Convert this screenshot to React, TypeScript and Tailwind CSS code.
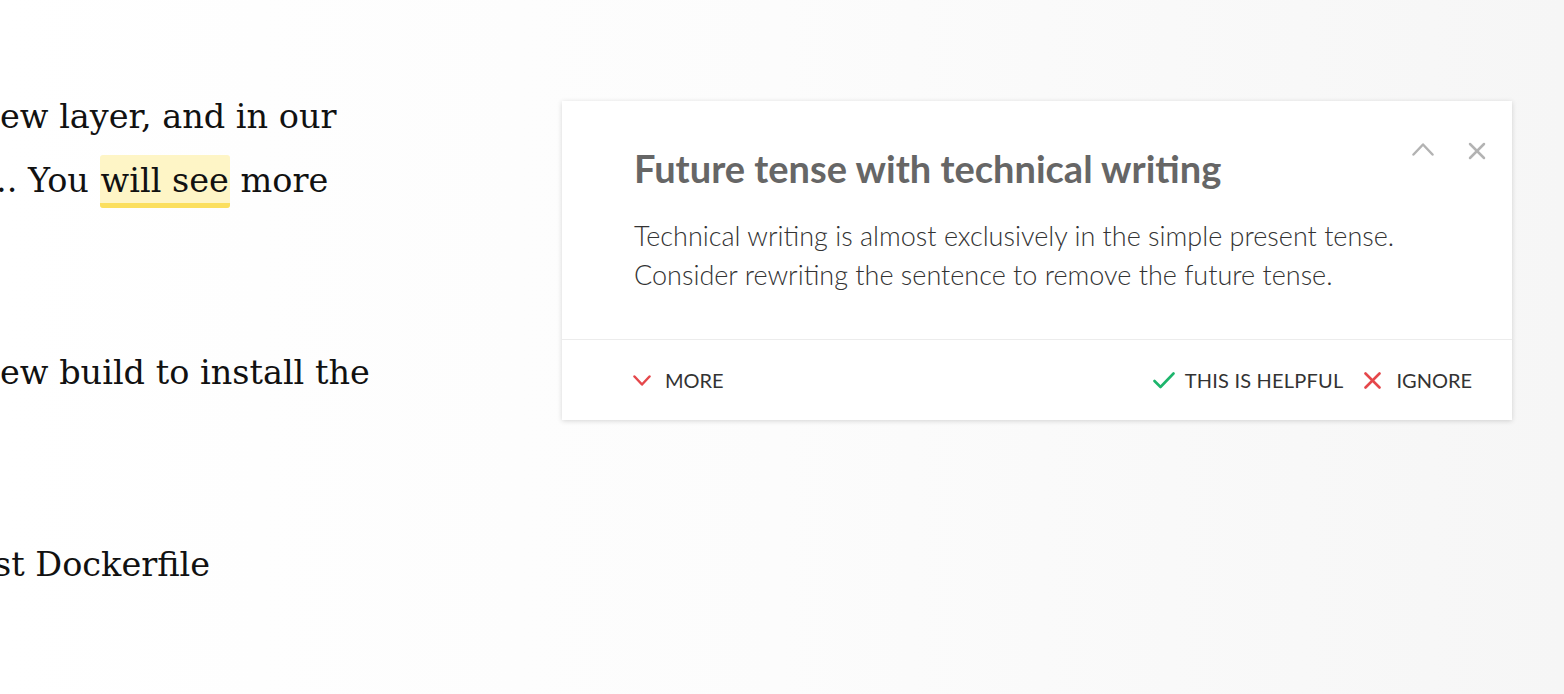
const serif = { fontFamily: '"DejaVu Serif", "Liberation Serif", serif' };

function Prose() {
  return (
    <div className="w-[562px] shrink-0 overflow-hidden pt-[85px] text-[33.5px] leading-[64px] text-[#111]" style={serif}>
      <div className="whitespace-nowrap">ew layer, and in our</div>
      <div className="whitespace-nowrap -ml-[4px]">
        .. You{" "}
        <span className="rounded-[3px] border-b-[5px] border-[#fbdf5f] bg-[#fef5c6] px-[1px] pt-[6px] pb-[3px]">will see</span>{" "}
        more
      </div>
      <div className="mt-[128px] whitespace-nowrap">ew build to install the</div>
      <div className="mt-[128px] whitespace-nowrap -ml-[6px]">st Dockerfile</div>
    </div>
  );
}

function Suggestion() {
  return (
    <div className="mt-[101px] w-[950px] shrink-0 self-start bg-white shadow-[0_1px_5px_rgba(0,0,0,0.16)]" style={{ fontFamily: "Lato, 'Open Sans', sans-serif" }}>
      <div className="relative border-b border-[#ececec] pl-[72px] pr-[60px] pt-[44px] pb-[45px]">
        <div className="absolute right-[26px] top-[41px] flex items-start gap-[34px]">
          <svg width="22" height="14" viewBox="0 0 22 14" fill="none" stroke="#b3b3b3" strokeWidth="2.5" strokeLinecap="round" strokeLinejoin="round">
            <polyline points="1.5,12.5 11,2.5 20.5,12.5" />
          </svg>
          <svg width="18" height="18" viewBox="0 0 18 18" fill="none" stroke="#b3b3b3" strokeWidth="2.5" strokeLinecap="round">
            <line x1="2" y1="2" x2="16" y2="16" />
            <line x1="16" y1="2" x2="2" y2="16" />
          </svg>
        </div>
        <h2 className="text-[38px] font-bold leading-[46px] text-[#666666]">Future tense with technical writing</h2>
        <p className="mt-[25px] text-[27px] font-light leading-[39px] text-[#333]">
          Technical writing is almost exclusively in the simple present tense.
          <br />
          Consider rewriting the sentence to remove the future tense.
        </p>
      </div>
      <div className="flex h-[80px] items-center justify-between pl-[71px] pr-[40px] text-[20px] text-[#333]">
        <button className="flex items-center gap-[14px] uppercase">
          <svg width="18" height="11" viewBox="0 0 18 11" fill="none" stroke="#e5474b" strokeWidth="2.5" strokeLinecap="round" strokeLinejoin="round">
            <polyline points="1.5,1.5 9,9.5 16.5,1.5" />
          </svg>
          More
        </button>
        <div className="flex items-center gap-[21px]">
          <button className="flex items-center gap-[10px] uppercase tracking-[0.2px]">
            <svg width="22" height="17" viewBox="0 0 22 17" fill="none" stroke="#1db56c" strokeWidth="2.6" strokeLinecap="round" strokeLinejoin="round">
              <polyline points="1.5,9 7.5,15 20.5,1.5" />
            </svg>
            This is helpful
          </button>
          <button className="flex items-center gap-[15px] uppercase">
            <svg width="17" height="17" viewBox="0 0 17 17" fill="none" stroke="#e5474b" strokeWidth="2.6" strokeLinecap="round">
              <line x1="1.5" y1="1.5" x2="15.5" y2="15.5" />
              <line x1="15.5" y1="1.5" x2="1.5" y2="15.5" />
            </svg>
            Ignore
          </button>
        </div>
      </div>
    </div>
  );
}

export default function App() {
  return (
    <div className="flex h-[694px] w-[1564px] overflow-hidden bg-gradient-to-r from-white via-[#fcfcfc] to-[#f6f6f6]">
      <Prose />
      <Suggestion />
    </div>
  );
}
